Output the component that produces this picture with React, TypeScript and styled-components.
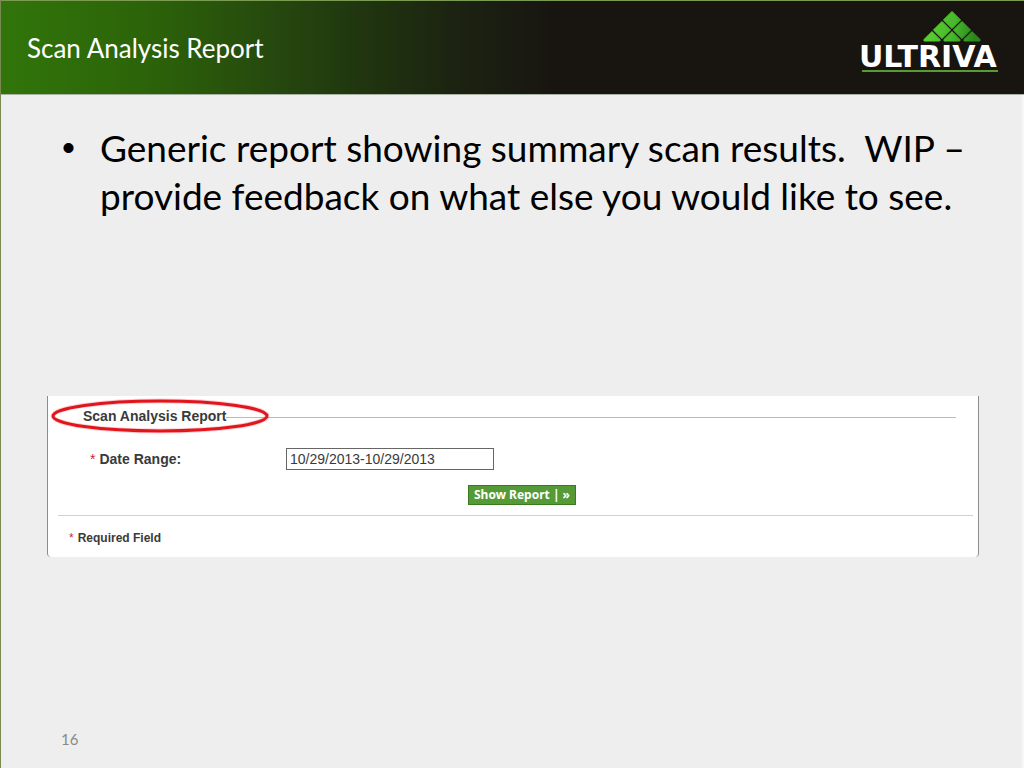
import React from 'react';
import styled, { createGlobalStyle } from 'styled-components';

const GlobalStyle = createGlobalStyle`
  *, *::before, *::after { box-sizing: border-box; }
  body { margin: 0; background: #eeeeee; }
`;

const Slide = styled.main`
  display: flex;
  flex-direction: column;
  min-height: 100vh;
  border-left: 1px solid #7b8a52;
  background: linear-gradient(to left, #f7f7f7 2px, #eeeeee 2px);
  color: #000;
  font-family: Lato, 'Open Sans', sans-serif;
`;

const Header = styled.header`
  display: flex;
  align-items: center;
  justify-content: space-between;
  height: 95px;
  padding: 0 24px 0 26px;
  border-top: 1px solid #7b9a52;
  border-bottom: 1px solid #a9b0a4;
  background: linear-gradient(90deg, #31750a 0%, #2c6409 14%, #264a0e 26%, #21380f 34%, #1c2411 44%, #181511 54%, #181511 100%);
`;

const Title = styled.h1`
  margin: 0;
  color: #fff;
  font-size: 26px;
  line-height: 32px;
  font-weight: 400;
`;

const Logo = styled.svg`
  display: block;
  width: 140px;
  height: 68px;
  margin-bottom: 10px;
  overflow: visible;
`;

const Wordmark = styled.text`
  fill: #fff;
  font-family: 'DejaVu Sans', sans-serif;
  font-size: 30px;
  font-weight: 700;
`;

const Points = styled.ul`
  margin: 0;
  padding: 29px 40px 0 61px;
  list-style: none;
  font-size: 37px;
  line-height: 48px;
`;

const Point = styled.li`
  display: flex;
`;

const Bullet = styled.span`
  flex: 0 0 38px;
  font-family: 'Liberation Sans', Arial, sans-serif;
`;

const Panel = styled.form`
  margin: 176px 45px 0 46px;
  padding: 8px 5px 9px 10px;
  border: solid #8c8c8c;
  border-width: 0 1px;
  border-radius: 0 0 4px 4px;
  background: #fff;
  color: #3a3a3a;
  font-family: 'Liberation Sans', Arial, sans-serif;
`;

const SectionHead = styled.div`
  position: relative;
  display: flex;
  align-items: center;
  padding: 0 17px 0 25px;
`;

const SectionTitle = styled.h2`
  margin: 0;
  font-size: 14px;
  line-height: 24px;
  font-weight: 700;
`;

const Rule = styled.span`
  flex: 1;
  height: 1px;
  margin-top: 2px;
  background: #b4b8d4;
`;

const Highlight = styled.svg`
  position: absolute;
  left: -8px;
  top: -7px;
  width: 220px;
  height: 38px;
`;

const Field = styled.div`
  display: flex;
  align-items: center;
  margin-top: 20px;
  padding-left: 32px;
`;

const Label = styled.label`
  flex: 0 0 196px;
  font-size: 14px;
  line-height: 22px;
  font-weight: 700;
`;

const Star = styled.span`
  color: #c8283c;
  font-weight: 400;
  margin-right: 4px;
`;

const DateInput = styled.input`
  width: 208px;
  height: 22px;
  padding: 0 3px;
  border: 1px solid #666;
  border-radius: 0;
  background: #fff;
  color: #3a3a3a;
  font-family: 'Liberation Sans', Arial, sans-serif;
  font-size: 14px;
`;

const Actions = styled.div`
  display: flex;
  justify-content: center;
  margin-top: 15px;
  padding: 0 0 10px 13px;
  border-bottom: 1px solid #cfd2d2;
`;

const ShowButton = styled.button`
  height: 20px;
  padding: 0 5px;
  border: 1px solid #3c7a22;
  background: #559a36;
  color: #fff;
  font-family: 'Noto Sans', sans-serif;
  font-size: 12px;
  line-height: 16px;
  font-weight: 700;
`;

const RequiredNote = styled.p`
  margin: 13px 0 0;
  padding-left: 11px;
  font-size: 12px;
  line-height: 19px;
  font-weight: 700;
`;

const Footer = styled.footer`
  margin-top: auto;
  padding: 0 60px 19px;
  color: #898989;
  font-size: 15px;
  line-height: 20px;
`;

const tiles: [number, number][] = [
  [92, 11],
  [82, 21],
  [102, 21],
];

const baseTiles = [72, 92, 112];

export default function App() {
  return (
    <>
      <GlobalStyle />
      <Slide>
        <Header>
          <Title>Scan Analysis Report</Title>
          <Logo viewBox="0 0 140 68" role="img" aria-label="Ultriva">
            <defs>
              <linearGradient id="leaf" gradientUnits="userSpaceOnUse" x1="70" y1="24" x2="114" y2="32">
                <stop offset="0" stopColor="#58cc30" />
                <stop offset="0.5" stopColor="#46b82a" />
                <stop offset="1" stopColor="#2b861c" />
              </linearGradient>
            </defs>
            <g fill="url(#leaf)" stroke="url(#leaf)" strokeWidth="1" strokeLinejoin="round">
              {tiles.map(([x, y]) => (
                <path key={`${x}-${y}`} d={`M${x} ${y - 8.6}l8.6 8.6l-8.6 8.6l-8.6 -8.6z`} />
              ))}
              {baseTiles.map((x) => (
                <path key={x} d={`M${x} 22.6l8 7.8q.6 1.6-.6 1.6h-14.8q-1.2 0-.6-1.6z`} />
              ))}
            </g>
            <Wordmark x="-1" y="58">ULTRIVA</Wordmark>
            <path d="M2 62H138" stroke="#5b9a30" strokeWidth="2" />
          </Logo>
        </Header>
        <Points>
          <Point>
            <Bullet>•</Bullet>
            <span>
              Generic report showing summary scan results.&nbsp; WIP –<br />
              provide feedback on what else you would like to see.
            </span>
          </Point>
        </Points>
        <Panel onSubmit={(e) => e.preventDefault()}>
          <SectionHead>
            <SectionTitle>Scan Analysis Report</SectionTitle>
            <Rule />
            <Highlight viewBox="0 0 220 38" aria-hidden="true">
              <ellipse cx="110" cy="19" rx="107" ry="15" fill="none" stroke="#e2141c" strokeOpacity="0.2" strokeWidth="5" />
              <ellipse cx="110" cy="19" rx="107" ry="15" fill="none" stroke="#e2141c" strokeWidth="3" />
            </Highlight>
          </SectionHead>
          <Field>
            <Label htmlFor="range"><Star>*</Star>Date Range:</Label>
            <DateInput id="range" type="text" defaultValue="10/29/2013-10/29/2013" />
          </Field>
          <Actions>
            <ShowButton type="submit">Show Report | »</ShowButton>
          </Actions>
          <RequiredNote><Star>*</Star>Required Field</RequiredNote>
        </Panel>
        <Footer>16</Footer>
      </Slide>
    </>
  );
}
